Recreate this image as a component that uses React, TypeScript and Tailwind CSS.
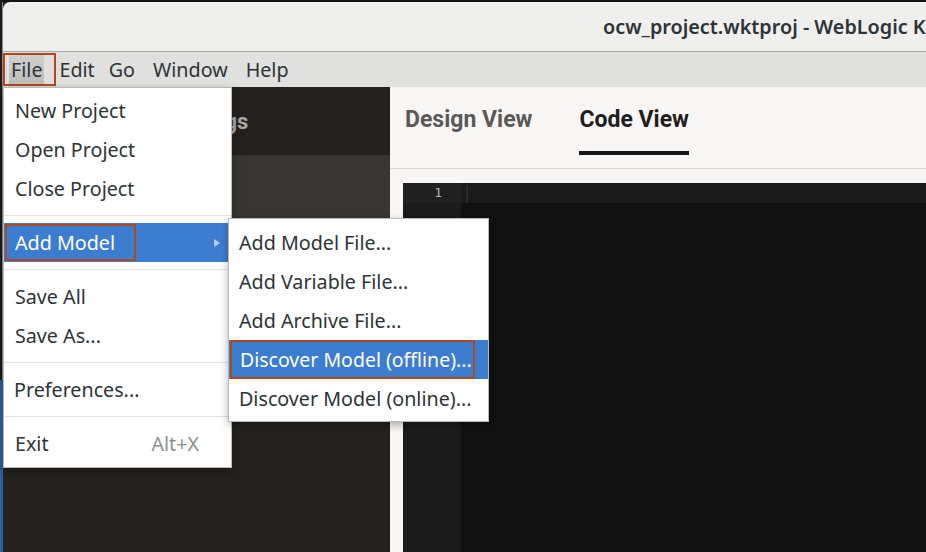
const menuItem = "flex h-[39px] items-center text-[19.7px] text-[#2e3436] whitespace-nowrap";

function Separator() {
  return <div className="my-[7px] h-px bg-[#e2e2e0]" />;
}

export default function App() {
  return (
    <div className="relative h-[552px] w-[926px] overflow-hidden bg-[#1c1c1c] font-['Noto_Sans',sans-serif]">
      {/* desktop edge */}
      <div className="absolute bottom-0 left-0 top-[380px] w-[3px] bg-[#2f5f9e]" />
      <div className="h-[2px] bg-[#151515]" />
      <div className="ml-[2px] flex h-[550px] flex-col border-l border-[#8a8a88]">
        {/* title bar */}
        <div className="flex h-[50px] shrink-0 items-center overflow-hidden rounded-tl-[7px] border-b border-[#a6a6a4] bg-[#efefee] pl-[600px]">
          <span className="whitespace-nowrap text-[19.8px] font-semibold text-[#2e3436]">
            ocw_project.wktproj - WebLogic Kubernetes Toolkit UI
          </span>
        </div>
        {/* menu bar */}
        <div className="flex h-[35px] shrink-0 items-center bg-[#e0e0de] text-[19.7px] text-[#2e3436]">
          <span className="flex h-[33px] items-center border-2 border-[#b0481e] pl-[4px] pr-[10px]">
            <span className="bg-gradient-to-b from-[#cfcfcd] to-[#bdbdbb] px-[2px]">File</span>
          </span>
          <span className="ml-[3px]">Edit</span>
          <span className="ml-[14px]">Go</span>
          <span className="ml-[18px]">Window</span>
          <span className="ml-[18px]">Help</span>
        </div>
        {/* content */}
        <div className="flex flex-1">
          <div className="flex w-[387px] flex-col bg-[#24211e]">
            <div className="flex h-[68px] items-center pl-[163px] text-[22px] font-bold text-[#a6a6a4] font-['Roboto',sans-serif]">
              Settings
            </div>
            <div className="h-[145px] bg-[#383532]" />
          </div>
          <div className="flex flex-1 flex-col bg-[#f8f6f4]">
            <div className="flex h-[82px] items-end gap-[47px] border-b border-[#dcdad8] pl-[15px] font-['Roboto',sans-serif] text-[23px] font-bold">
              <div className="flex h-full flex-col items-center">
                <div className="flex flex-1 items-center pt-[2px] text-[#5a5958]">Design View</div>
                <div className="mb-[13px] h-[4px] w-full" />
              </div>
              <div className="flex h-full flex-col items-center">
                <div className="flex flex-1 items-center pt-[2px] text-[#1f1e1d]">Code View</div>
                <div className="mb-[13px] h-[4px] w-full bg-[#161616]" />
              </div>
            </div>
            <div className="flex flex-1 pl-[13px] pt-[14px]">
              <div className="flex flex-1 bg-[#111111]">
                <div className="w-[58px] bg-[#1b1b1b]">
                  <div className="flex h-[20px] items-center justify-end bg-[#202020] pr-[19px] font-['DejaVu_Sans_Mono',monospace] text-[13px] text-[#b4b4b4]">
                    1
                  </div>
                </div>
                <div className="flex-1">
                  <div className="flex h-[20px] items-center bg-[#1b1b1b] pl-[5px]">
                    <div className="h-[17px] w-[2px] bg-[#2c2c2c]" />
                  </div>
                </div>
              </div>
            </div>
          </div>
        </div>
      </div>

      {/* File menu */}
      <div className="absolute left-[3px] top-[87px] w-[229px] border border-[#b9b9b7] bg-white pb-[4px] pt-[3px] shadow-[0_3px_8px_rgba(0,0,0,0.3)]">
        <div className={`${menuItem} px-[11px]`}>New Project</div>
        <div className={`${menuItem} px-[11px]`}>Open Project</div>
        <div className={`${menuItem} px-[11px]`}>Close Project</div>
        <Separator />
        <div className="flex h-[39px] items-center justify-between bg-[#3c7dd0] pl-[1px] pr-[10px] text-[19.7px] text-white">
          <span className="flex h-[37px] items-center border-2 border-[#b0481e] pl-[8px] pr-[19px]">Add Model</span>
          <svg width="8" height="10" viewBox="0 0 8 10">
            <path d="M1 1 L7 5 L1 9 Z" fill="#b9cde6" />
          </svg>
        </div>
        <Separator />
        <div className={`${menuItem} px-[11px]`}>Save All</div>
        <div className={`${menuItem} px-[11px]`}>Save As...</div>
        <Separator />
        <div className={`${menuItem} px-[10px]`}>Preferences...</div>
        <Separator />
        <div className={`${menuItem} justify-between pl-[11px] pr-[32px]`}>
          <span>Exit</span>
          <span className="text-[#8d8f8f]">Alt+X</span>
        </div>
      </div>

      {/* Add Model submenu */}
      <div className="absolute left-[228px] top-[218px] w-[261px] border border-[#b9b9b7] bg-white pb-[3px] pt-[4px] shadow-[0_3px_8px_rgba(0,0,0,0.3)]">
        <div className={`${menuItem} px-[10px]`}>Add Model File...</div>
        <div className={`${menuItem} px-[10px]`}>Add Variable File...</div>
        <div className={`${menuItem} px-[10px]`}>Add Archive File...</div>
        <div className="flex h-[39px] items-center bg-[#3c7dd0] pl-[1px] text-[19.5px] text-white whitespace-nowrap">
          <span className="flex h-[39px] items-center border-2 border-[#b0481e] pl-[8px] pr-[1px]">
            Discover Model (offline)...
          </span>
        </div>
        <div className={`${menuItem} px-[10px]`}>Discover Model (online)...</div>
      </div>
    </div>
  );
}
